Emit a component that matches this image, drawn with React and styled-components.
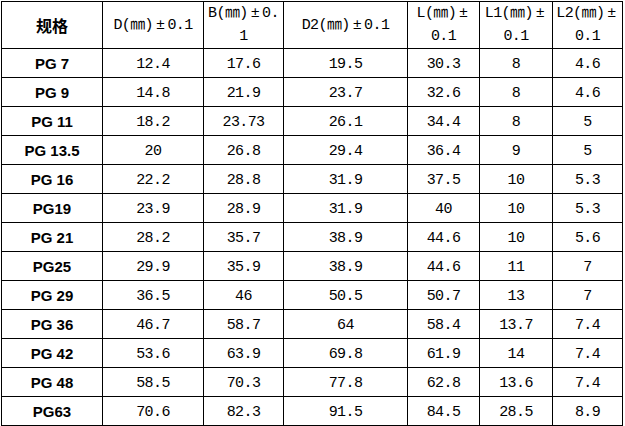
import React from "react"
import styled, { createGlobalStyle } from "styled-components"

const GlobalStyle = createGlobalStyle`
  html, body {
    margin: 0;
    padding: 0;
    background: #fff;
  }
  body {
    padding: 1px 0 0 1px;
  }
`

// cell widths measured from the screenshot, border included
const widths = [101, 101, 80, 124, 72, 73, 70]

const headers = [
  ["规格"],
  ["D(㎜)±0.1"],
  ["B(㎜)±0.", "1"],
  ["D2(㎜)±0.1"],
  ["L(㎜)±", "0.1"],
  ["L1(㎜)±", "0.1"],
  ["L2(㎜)±", "0.1"]
]

const rows = [
  ["PG 7", "12.4", "17.6", "19.5", "30.3", "8", "4.6"],
  ["PG 9", "14.8", "21.9", "23.7", "32.6", "8", "4.6"],
  ["PG 11", "18.2", "23.73", "26.1", "34.4", "8", "5"],
  ["PG 13.5", "20", "26.8", "29.4", "36.4", "9", "5"],
  ["PG 16", "22.2", "28.8", "31.9", "37.5", "10", "5.3"],
  ["PG19", "23.9", "28.9", "31.9", "40", "10", "5.3"],
  ["PG 21", "28.2", "35.7", "38.9", "44.6", "10", "5.6"],
  ["PG25", "29.9", "35.9", "38.9", "44.6", "11", "7"],
  ["PG 29", "36.5", "46", "50.5", "50.7", "13", "7"],
  ["PG 36", "46.7", "58.7", "64", "58.4", "13.7", "7.4"],
  ["PG 42", "53.6", "63.9", "69.8", "61.9", "14", "7.4"],
  ["PG 48", "58.5", "70.3", "77.8", "62.8", "13.6", "7.4"],
  ["PG63", "70.6", "82.3", "91.5", "84.5", "28.5", "8.9"]
]

const Table = styled.table`
  border-collapse: separate;
  border-spacing: 0;
  table-layout: fixed;
  width: 622px;
  border-top: 1px solid #000;
  border-left: 1px solid #000;
  color: #000;
`

const HeadCell = styled.th`
  box-sizing: border-box;
  width: ${p => p.$w}px;
  height: 46px;
  padding: 0;
  border-right: 1px solid #000;
  border-bottom: 1px solid #000;
  text-align: center;
  vertical-align: middle;
  white-space: nowrap;
  font-weight: ${p => (p.$title ? 700 : 400)};
  font-family: ${p =>
    p.$title
      ? `"Noto Sans CJK SC", sans-serif`
      : `"Liberation Mono", "Noto Sans CJK SC", monospace`};
  font-size: ${p => (p.$title ? 16 : 15)}px;
  letter-spacing: ${p => (p.$title ? 0 : -0.6)}px;
  line-height: 23px;
`

const Sign = styled.span`
  padding: 0 3px;
`

const Cell = styled.td`
  box-sizing: border-box;
  height: 29px;
  padding: 0;
  border-right: 1px solid #000;
  border-bottom: 1px solid #000;
  text-align: center;
  vertical-align: middle;
  white-space: nowrap;
  font-family: "Liberation Mono", monospace;
  font-size: 15px;
  letter-spacing: -0.6px;
  padding-top: 2px;
`

const NameCell = styled(Cell)`
  font-family: "Liberation Sans", Arial, sans-serif;
  font-weight: 700;
  font-size: 15px;
  letter-spacing: 0;
  padding-top: 0;
`

const renderHead = line =>
  line.split("±").map((part, i, all) => (
    <React.Fragment key={i}>
      {part}
      {i < all.length - 1 && <Sign>±</Sign>}
    </React.Fragment>
  ))

export default function App() {
  return (
    <>
      <GlobalStyle />
      <Table>
        <thead>
          <tr>
            {headers.map((lines, i) => (
              <HeadCell key={i} $w={widths[i]} $title={i === 0}>
                {lines.map((line, j) => (
                  <React.Fragment key={j}>
                    {j > 0 && <br />}
                    {renderHead(line)}
                  </React.Fragment>
                ))}
              </HeadCell>
            ))}
          </tr>
        </thead>
        <tbody>
          {rows.map(row => (
            <tr key={row[0]}>
              {row.map((value, i) =>
                i === 0 ? (
                  <NameCell key={i}>{value}</NameCell>
                ) : (
                  <Cell key={i}>{value}</Cell>
                )
              )}
            </tr>
          ))}
        </tbody>
      </Table>
    </>
  )
}
